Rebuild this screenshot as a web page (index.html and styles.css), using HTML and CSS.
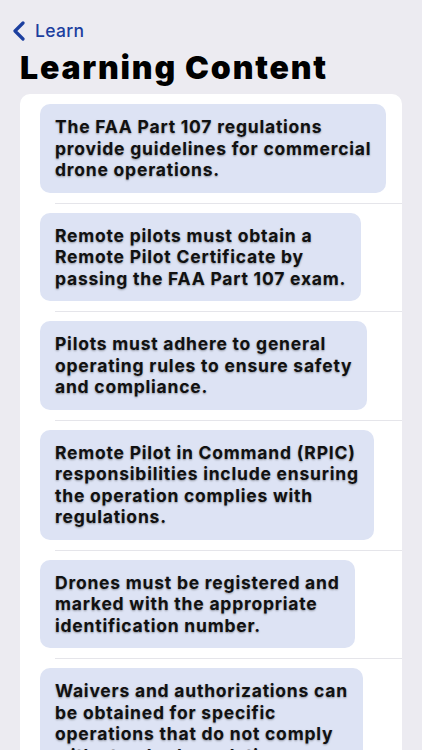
FILE: index.html
```html
<!DOCTYPE html>
<html>
<head>
<meta charset="utf-8">
<link rel="stylesheet" href="styles.css">
</head>
<body>
<div class="screen">
  <nav class="nav">
    <a class="back">
      <svg class="chev" width="14" height="20" viewBox="0 0 14 20"><path d="M11 2 L3 10 L11 18" fill="none" stroke="#1c3f9f" stroke-width="3.2" stroke-linecap="round" stroke-linejoin="round"/></svg>
      <span>Learn</span>
    </a>
  </nav>
  <h1 class="title">Learning Content</h1>
  <div class="card">
    <div class="row"><div class="bubble">The FAA Part 107 regulations<br>provide guidelines for commercial<br>drone operations.</div></div>
    <div class="row"><div class="bubble">Remote pilots must obtain a<br>Remote Pilot Certificate by<br>passing the FAA Part 107 exam.</div></div>
    <div class="row"><div class="bubble">Pilots must adhere to general<br>operating rules to ensure safety<br>and compliance.</div></div>
    <div class="row"><div class="bubble">Remote Pilot in Command (RPIC)<br>responsibilities include ensuring<br>the operation complies with<br>regulations.</div></div>
    <div class="row"><div class="bubble">Drones must be registered and<br>marked with the appropriate<br>identification number.</div></div>
    <div class="row"><div class="bubble">Waivers and authorizations can<br>be obtained for specific<br>operations that do not comply<br>with standard regulations.</div></div>
  </div>
</div>
</body>
</html>
```
FILE: styles.css
```css
html, body {
  margin: 0;
  padding: 0;
  background: #ecebf1;
  height: 100%;
  overflow: hidden;
}
.screen {
  font-family: Inter, "Noto Sans", sans-serif;
  padding: 0 20px;
}
.nav {
  height: 60px;
  display: flex;
  align-items: flex-start;
  padding-top: 20px;
  box-sizing: border-box;
  margin-left: -8px;
}
.back {
  display: flex;
  align-items: center;
  gap: 9px;
  color: #1c3f9f;
  font-size: 17.5px;
  font-weight: 500;
  letter-spacing: 0.3px;
}
.chev { display: block; }
.title {
  margin: -12px 0 0 0;
  font-size: 32px;
  font-weight: 900;
  letter-spacing: 1.8px;
  line-height: 40px;
  color: #000;
  height: 46px;
}
.card {
  background: #fff;
  border-radius: 10px 10px 0 0;
  overflow: hidden;
}
.row {
  padding: 10px 20px;
  position: relative;
}
.row + .row::before {
  content: "";
  position: absolute;
  top: 0;
  left: 35px;
  right: 0;
  height: 1px;
  background: #e5e5ea;
}
.bubble {
  width: max-content;
  background: #dde3f4;
  border-radius: 10px;
  padding: 12px 15px 12px 15px;
  font-size: 17.5px;
  font-weight: 700;
  letter-spacing: 0.78px;
  line-height: 21.5px;
  color: #111;
  text-shadow: 0 1px 2px rgba(0,0,0,0.35);
}
```
